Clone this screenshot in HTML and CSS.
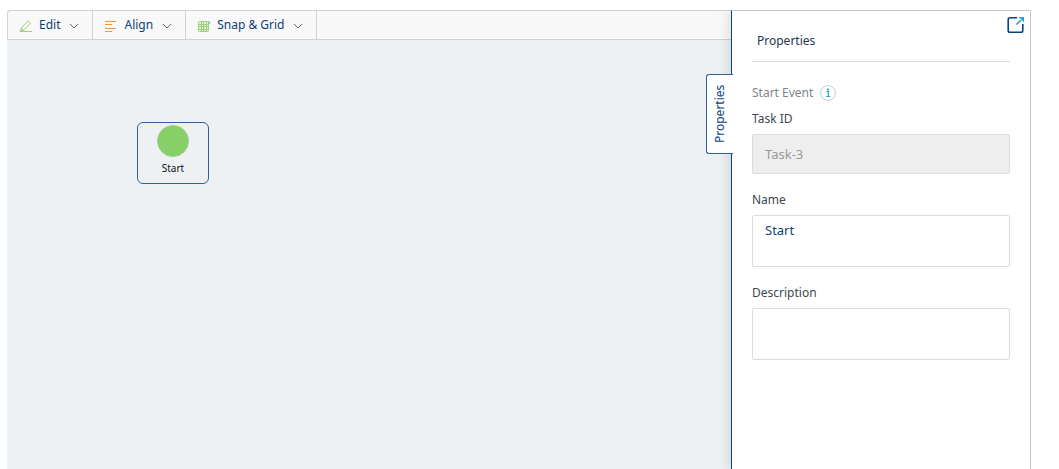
FILE: index.html
```html
<!DOCTYPE html>
<html lang="en">
<head>
    <meta charset="UTF-8">
    <meta name="viewport" content="width=device-width, initial-scale=1.0">
    <title>Workflow Designer</title>
    <link rel="stylesheet" href="styles.css">
</head>
<body>
    <div class="designer">
        <main class="workspace">
            <div class="toolbar">
                <button type="button" class="menu-btn">
                    <svg class="icon" width="14" height="14" viewBox="0 0 14 14" fill="none" stroke="#9ccf80">
                        <path d="M2.2 8.8 9.2 1.8 11.6 4.2 4.6 11.2 1.6 11.8ZM2.2 8.8 4.6 11.2M1 12.5H13"/>
                    </svg>
                    Edit
                    <svg class="arrow" width="10" height="6" viewBox="0 0 10 6" fill="none" stroke="#666"><path d="M1 1 5 5 9 1"/></svg>
                </button>
                <button type="button" class="menu-btn">
                    <svg class="icon" width="14" height="14" viewBox="0 0 14 14" fill="none" stroke="#f8962f">
                        <path d="M1 2.5H12M1 5.5H8M1 9.5H12M1 12.5H8"/>
                    </svg>
                    Align
                    <svg class="arrow" width="10" height="6" viewBox="0 0 10 6" fill="none" stroke="#666"><path d="M1 1 5 5 9 1"/></svg>
                </button>
                <button type="button" class="menu-btn">
                    <svg class="icon" width="14" height="14" viewBox="0 0 14 14" fill="none" stroke="#9ccf80">
                        <rect x="1.5" y="2.5" width="10" height="10" rx="1" fill="#e6f4dd"/>
                        <path d="M4.5 2V13M6.5 2V13M9.5 2V13M1 5.5H12M1 7.5H12M1 10.5H12"/>
                        <path d="M11 2.5H12.5V5"/>
                    </svg>
                    Snap &amp; Grid
                    <svg class="arrow" width="10" height="6" viewBox="0 0 10 6" fill="none" stroke="#666"><path d="M1 1 5 5 9 1"/></svg>
                </button>
            </div>
            <div class="canvas">
                <!-- nodes are placed freely on the canvas -->
                <div class="node">
                    <span class="node-shape"></span>
                    <span class="node-label">Start</span>
                </div>
            </div>
        </main>

        <aside class="panel">
            <button type="button" class="panel-tab">Properties</button>
            <button type="button" class="popout" aria-label="Open in new window">
                <svg width="18" height="18" viewBox="0 0 18 18" fill="none">
                    <path d="M10 1.7H3Q1.2 1.7 1.2 3.5V14.5Q1.2 16.3 3 16.3H14Q15.8 16.3 15.8 14.5V8" stroke="#0b4377" stroke-width="1.6"/>
                    <path d="M9.5 8.5 14 4" stroke="#1ea5dc" stroke-width="1.6"/>
                    <path d="M11.8 1H17V6.2Z" fill="#1ea5dc"/>
                </svg>
            </button>
            <h2 class="panel-title">Properties</h2>
            <form class="panel-form">
                <div class="event-type">
                    Start Event
                    <svg width="16" height="16" viewBox="0 0 16 16" fill="none">
                        <circle cx="8" cy="8" r="7.4" stroke="#c4cbd0"/>
                        <path d="M6.5 6.7H8.3V11.5M6.3 11.5H10.2" stroke="#1ea5dc" stroke-width="1.2"/>
                        <rect x="7" y="3.6" width="1.8" height="1.8" fill="#1ea5dc"/>
                    </svg>
                </div>
                <label for="taskId">Task ID</label>
                <input type="text" id="taskId" value="Task-3" disabled>
                <label for="name">Name</label>
                <textarea id="name">Start</textarea>
                <label for="description">Description</label>
                <textarea id="description"></textarea>
            </form>
        </aside>
    </div>
</body>
</html>
```
FILE: styles.css
```css
* {
    box-sizing: border-box;
}

body {
    margin: 0;
    background: #fff;
    color: #3c4852;
    font-family: "Noto Sans", "Open Sans", sans-serif;
    font-size: 12px;
    line-height: 18px;
}

button {
    font: inherit;
    cursor: pointer;
}

.designer {
    display: flex;
    height: 100vh;
    padding: 10px 28px 0 7px;
}

.workspace {
    flex: 1;
    display: flex;
    flex-direction: column;
    min-width: 0;
}

.toolbar {
    display: flex;
    height: 30px;
    background: #f9f9f9;
    border: 1px solid #d2d2d2;
    border-right: none;
    border-radius: 3px 0 0 0;
}

.menu-btn {
    display: flex;
    align-items: center;
    padding: 0 13px 0 11px;
    background: none;
    border: none;
    border-right: 1px solid #d2d2d2;
    color: #0b4377;
}

.icon {
    margin-top: 1px;
    margin-right: 6px;
}

.arrow {
    margin-top: 2px;
    margin-left: 9px;
}

.canvas {
    flex: 1;
    position: relative;
    background: #edf1f4;
}

.node {
    position: absolute;
    left: 130px;
    top: 82px;
    display: flex;
    flex-direction: column;
    align-items: center;
    width: 72px;
    height: 62px;
    padding-top: 2px;
    border: 1px solid #2c659b;
    border-radius: 6px;
}

.node-shape {
    width: 32px;
    height: 32px;
    background: #87d068;
    border: 1px solid #a3cc93;
    border-radius: 50%;
}

.node-label {
    margin-top: 2px;
    color: #111;
    font-size: 10px;
}

.panel {
    position: relative;
    width: 300px;
    padding: 21px 20px;
    background: #fff;
    border: 1px solid #c6c6c6;
    border-left: 1px solid #0b4377;
    border-bottom: none;
    box-shadow: -2px 0 12px rgba(0, 0, 0, 0.12);
    clip-path: inset(0 0 0 -40px);
}

/* tab hangs over the left edge of the panel, turned so the text reads upwards */
.panel-tab {
    position: absolute;
    left: -26px;
    top: 63px;
    width: 27px;
    height: 80px;
    padding: 0;
    background: #fff;
    border: 1px solid #2c659b;
    border-left: none;
    border-radius: 0 3px 3px 0;
    color: #0b4377;
    writing-mode: vertical-rl;
    transform: rotate(180deg);
}

.popout {
    position: absolute;
    right: 5px;
    top: 5px;
    display: flex;
    padding: 0;
    background: none;
    border: none;
}

.panel-title {
    margin: 0 0 22px;
    padding: 0 5px 11px;
    border-bottom: 1px solid #dcdcdc;
    color: #24364c;
    font-size: 12px;
    font-weight: 400;
}

.panel-form {
    display: flex;
    flex-direction: column;
}

.event-type {
    display: flex;
    align-items: center;
    gap: 7px;
    margin-bottom: 8px;
    color: #808589;
}

.panel-form label {
    margin-bottom: 6px;
}

.panel-form input,
.panel-form textarea {
    height: 40px;
    margin: 0 0 17px;
    padding: 0 12px;
    background: #fff;
    border: 1px solid #dcdcdc;
    border-radius: 2px;
    color: #0b4377;
    font: inherit;
    font-size: 13px;
    resize: none;
}

.panel-form input:disabled {
    background: #eee;
    color: #999;
}

.panel-form textarea {
    height: 52px;
    padding: 5px 12px;
}
```
